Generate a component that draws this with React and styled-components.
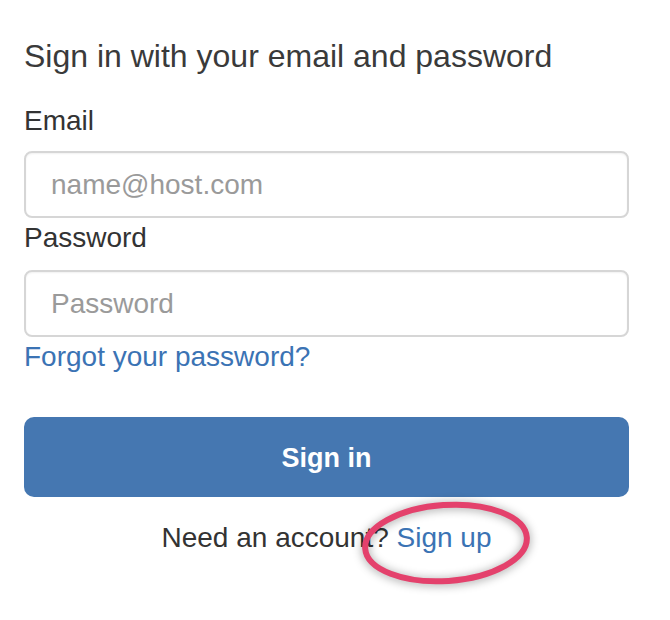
import React from "react";
import styled, { createGlobalStyle } from "styled-components";

const Global = createGlobalStyle`
  html, body { margin: 0; padding: 0; background: #fff; }
  body { font-family: "Liberation Sans", Arial, sans-serif; color: #333; }
  * { box-sizing: border-box; }
`;

const Page = styled.div`
  position: relative;
  width: 670px;
  height: 620px;
  padding: 36px 41px 0 24px;
`;

const Form = styled.form`
  display: flex;
  flex-direction: column;
  width: 605px;
`;

const Heading = styled.h1`
  margin: 0;
  font-size: 32px;
  line-height: 40px;
  font-weight: 400;
  color: #3a3a3a;
`;

const Label = styled.label`
  display: block;
  margin-top: ${(p) => p.$mt}px;
  font-size: 28px;
  line-height: 40px;
  color: #333;
`;

const Input = styled.input`
  display: block;
  width: 100%;
  height: 67px;
  margin-top: ${(p) => p.$mt}px;
  padding: 12px 25px;
  font-family: "Liberation Sans", Arial, sans-serif;
  font-size: 28px;
  color: #555;
  background: #fff;
  border: 2px solid #d6d6d6;
  border-radius: 8px;
  box-shadow: inset 0 1px 2px rgba(0, 0, 0, 0.06);
  outline: none;
  &::placeholder { color: #9a9a9a; }
`;

const Link = styled.a`
  color: #3b73b4;
  text-decoration: none;
  cursor: pointer;
`;

const ForgotLine = styled.div`
  font-size: 28px;
  line-height: 40px;
`;

const Button = styled.button`
  margin-top: 40px;
  height: 80px;
  width: 100%;
  padding: 2px 0 0;
  border: none;
  border-radius: 10px;
  background: #4577b1;
  color: #fff;
  font-family: "Liberation Sans", Arial, sans-serif;
  font-size: 27px;
  font-weight: 700;
  cursor: pointer;
`;

const Footer = styled.p`
  margin: 21px 0 0;
  text-align: center;
  font-size: 28px;
  line-height: 40px;
  color: #333;
`;

const Annotation = styled.svg`
  position: absolute;
  left: 355px;
  top: 495px;
  width: 185px;
  height: 95px;
  overflow: visible;
  filter: drop-shadow(0 1px 5px rgba(0, 0, 0, 0.4));
  pointer-events: none;
`;

export default function App() {
  return (
    <>
      <Global />
      <Page>
        <Form onSubmit={(e) => e.preventDefault()}>
          <Heading>Sign in with your email and password</Heading>
          <Label $mt={25}>Email</Label>
          <Input $mt={10} type="email" placeholder="name@host.com" />
          <Label $mt={0}>Password</Label>
          <Input $mt={12} type="password" placeholder="Password" />
          <ForgotLine>
            <Link>Forgot your password?</Link>
          </ForgotLine>
          <Button type="submit">Sign in</Button>
          <Footer>
            Need an account? <Link>Sign up</Link>
          </Footer>
        </Form>
        <Annotation viewBox="0 0 185 95">
          <ellipse
            cx="91"
            cy="48"
            rx="81"
            ry="38"
            transform="rotate(-4 91 48)"
            fill="none"
            stroke="#e4416c"
            strokeWidth="6"
          />
        </Annotation>
      </Page>
    </>
  );
}
